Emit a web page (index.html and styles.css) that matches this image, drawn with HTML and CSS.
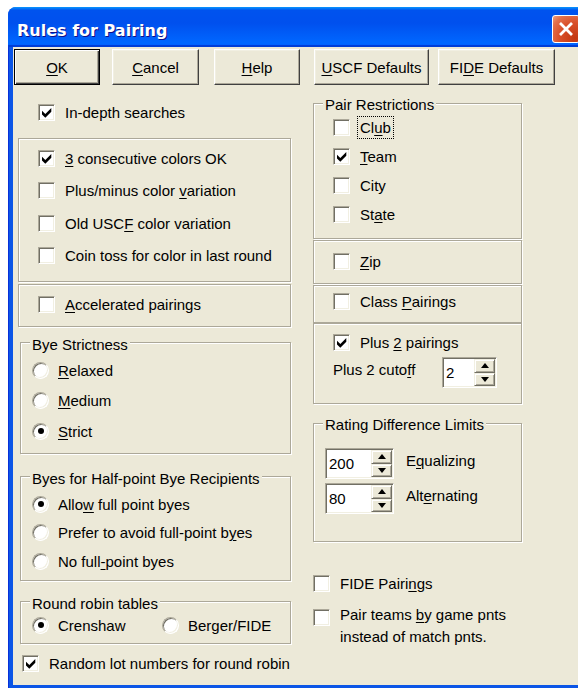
FILE: index.html
```html
<!DOCTYPE html>
<html lang="en">
<head>
<meta charset="utf-8">
<title>Rules for Pairing</title>
<link rel="stylesheet" href="styles.css">
</head>
<body>
<div class="window">
  <div class="titlebar">
    <span class="title">Rules for Pairing</span>
    <span class="close" aria-label="Close">
      <svg viewBox="0 0 26 26" width="26" height="26"><path d="M7 7 L19 19 M19 7 L7 19"/></svg>
    </span>
  </div>
  <div class="frame">
    <div class="client">
      <div class="buttons">
        <button class="btn default b-ok"><u>O</u>K</button>
        <button class="btn b-cancel"><u>C</u>ancel</button>
        <button class="btn b-help"><u>H</u>elp</button>
        <button class="btn b-uscf"><u>U</u>SCF Defaults</button>
        <button class="btn b-fide">FI<u>D</u>E Defaults</button>
      </div>

      <div class="panes">
        <!-- left column -->
        <div class="col col-left">
          <div class="opt indepth">
            <span class="cb"><svg viewBox="1 1 15 15" width="15" height="15"><polygon points="4,6.8 7.3,10.1 13.3,4.1 13.3,7.8 7.3,13.8 4,10.5"/></svg></span>
            <span class="lbl">In-depth searches</span>
          </div>

          <div class="group g-colors">
            <div class="opt"><span class="cb"><svg viewBox="1 1 15 15" width="15" height="15"><polygon points="4,6.8 7.3,10.1 13.3,4.1 13.3,7.8 7.3,13.8 4,10.5"/></svg></span><span class="lbl"><u>3</u> consecutive colors OK</span></div>
            <div class="opt"><span class="cb"></span><span class="lbl">Plus/minus color <u>v</u>ariation</span></div>
            <div class="opt"><span class="cb"></span><span class="lbl">Old USC<u>F</u> color variation</span></div>
            <div class="opt"><span class="cb"></span><span class="lbl">Coin toss for color in last round</span></div>
          </div>

          <div class="group g-accel">
            <div class="opt"><span class="cb"></span><span class="lbl"><u>A</u>ccelerated pairings</span></div>
          </div>

          <fieldset class="fs fs-bye">
            <legend>Bye Strictness</legend>
            <div class="opt"><span class="rb"></span><span class="lbl"><u>R</u>elaxed</span></div>
            <div class="opt"><span class="rb"></span><span class="lbl"><u>M</u>edium</span></div>
            <div class="opt"><span class="rb on"></span><span class="lbl"><u>S</u>trict</span></div>
          </fieldset>

          <fieldset class="fs fs-half">
            <legend>Byes for Half-point Bye Recipients</legend>
            <div class="opt"><span class="rb on"></span><span class="lbl">Allo<u>w</u> full point byes</span></div>
            <div class="opt"><span class="rb"></span><span class="lbl">Prefer to avoid full-point b<u>y</u>es</span></div>
            <div class="opt"><span class="rb"></span><span class="lbl">No full<u>-</u>point byes</span></div>
          </fieldset>

          <fieldset class="fs fs-rr">
            <legend>Round robin tables</legend>
            <div class="rr-row">
              <div class="opt rr-first"><span class="rb on"></span><span class="lbl">Crenshaw</span></div>
              <div class="opt"><span class="rb"></span><span class="lbl">Berger/FIDE</span></div>
            </div>
          </fieldset>

          <div class="opt randomlot">
            <span class="cb"><svg viewBox="1 1 15 15" width="15" height="15"><polygon points="4,6.8 7.3,10.1 13.3,4.1 13.3,7.8 7.3,13.8 4,10.5"/></svg></span>
            <span class="lbl">Random lot numbers for round robin</span>
          </div>
        </div>

        <!-- right column -->
        <div class="col col-right">
          <fieldset class="fs fs-pair">
            <legend>Pair Restrictions</legend>
            <div class="opt"><span class="cb"></span><span class="lbl focus">Cl<u>u</u>b</span></div>
            <div class="opt"><span class="cb"><svg viewBox="1 1 15 15" width="15" height="15"><polygon points="4,6.8 7.3,10.1 13.3,4.1 13.3,7.8 7.3,13.8 4,10.5"/></svg></span><span class="lbl"><u>T</u>eam</span></div>
            <div class="opt"><span class="cb"></span><span class="lbl">City</span></div>
            <div class="opt"><span class="cb"></span><span class="lbl">St<u>a</u>te</span></div>
          </fieldset>

          <div class="group g-zip">
            <div class="opt"><span class="cb"></span><span class="lbl"><u>Z</u>ip</span></div>
          </div>

          <div class="group g-class">
            <div class="opt"><span class="cb"></span><span class="lbl">Class <u>P</u>airings</span></div>
          </div>

          <div class="group g-plus2">
            <div class="opt"><span class="cb"><svg viewBox="1 1 15 15" width="15" height="15"><polygon points="4,6.8 7.3,10.1 13.3,4.1 13.3,7.8 7.3,13.8 4,10.5"/></svg></span><span class="lbl">Plus <u>2</u> pairings</span></div>
            <div class="spin-row cutoff-row">
              <span class="txt cutoff-txt">Plus 2 cuto<u>f</u>f</span>
              <div class="spin s-small"><span class="val">2</span><span class="updown"><span class="arr up"></span><span class="arr down"></span></span></div>
            </div>
          </div>

          <fieldset class="fs fs-rating">
            <legend>Rating Difference Limits</legend>
            <div class="spin-row">
              <div class="spin s-wide"><span class="val">200</span><span class="updown"><span class="arr up"></span><span class="arr down"></span></span></div>
              <span class="txt">E<u>q</u>ualizing</span>
            </div>
            <div class="spin-row second">
              <div class="spin s-wide"><span class="val">80</span><span class="updown"><span class="arr up"></span><span class="arr down"></span></span></div>
              <span class="txt">Alt<u>e</u>rnating</span>
            </div>
          </fieldset>

          <div class="opt fidepair">
            <span class="cb"></span><span class="lbl">FIDE Pairi<u>n</u>gs</span>
          </div>

          <div class="opt teams">
            <span class="cb"></span><span class="lbl multi">Pair teams <u>b</u>y game pnts<br>instead of match pnts.</span>
          </div>
        </div>
      </div>
    </div>
  </div>
</div>
</body>
</html>
```

FILE: styles.css
```css
* { box-sizing: border-box; }

html, body {
  margin: 0;
  padding: 0;
  background: #fff;
  overflow: hidden;
}

body {
  font-family: "Liberation Sans", Arial, sans-serif;
  font-size: 15px;
  line-height: 17px;
  color: #000;
}

u { text-underline-offset: 2px; }

/* ---------- window chrome ---------- */
.window {
  margin: 7px 0 0 8px;
  width: 590px;
  border-radius: 8px 8px 0 0;
  background: #0a4fe3;
}

.titlebar {
  height: 40px;
  display: flex;
  align-items: flex-start;
  padding: 0 18px 0 9px;
  border-radius: 8px 8px 0 0;
  background: linear-gradient(180deg, #0997ff, #0053ee 8%, #0050ee 40%, #0066ff 88%, #0066ff 93%, #005bff 95%, #003dd7 96%, #003dd7);
}

.title {
  flex: 1;
  margin-top: 14px;
  font-family: "DejaVu Sans", sans-serif;
  font-weight: bold;
  font-size: 16px;
  line-height: 19px;
  color: #fff;
  text-shadow: 1px 1px #0f1089;
}

.close {
  margin-top: 8px;
  width: 28px;
  height: 28px;
  border: 1px solid #fff;
  border-radius: 3px;
  background: radial-gradient(circle at 85% 85%, #c3360f 0%, #d9502a 50%, #e3704c 80%, #f0a080 100%);
  display: block;
}

.close svg {
  display: block;
  fill: none;
  stroke: #fff;
  stroke-width: 2.8;
}

.frame {
  padding: 0 5px 5px 5px;
  background: #0b55e6;
  box-shadow: inset 1px 0 0 #0831d9;
}

.client {
  height: 638px;
  background: #ece9d8;
  padding-top: 2px;
}

/* ---------- push buttons ---------- */
.buttons {
  display: flex;
  margin-left: 1px;
  height: 36px;
}

.btn {
  height: 36px;
  padding: 0;
  margin: 0;
  font: 15px/17px "Liberation Sans", Arial, sans-serif;
  color: #000;
  background: #ece9d8;
  border: 1px solid;
  border-color: #fff #404040 #404040 #fff;
  box-shadow: inset -1px -1px 0 #aca899, inset 1px 1px 0 #f1efe2;
  display: flex;
  align-items: center;
  justify-content: center;
}

.btn.default {
  border-color: #000;
  box-shadow: inset 1px 1px 0 #fff, inset -1px -1px 0 #404040, inset -2px -2px 0 #aca899;
}

.b-ok { width: 86px; }
.b-cancel { width: 87px; margin-left: 12px; }
.b-help { width: 86px; margin-left: 15px; }
.b-uscf { width: 115px; margin-left: 14px; }
.b-fide { width: 117px; margin-left: 9px; }

/* ---------- columns ---------- */
.panes {
  display: flex;
  margin-left: 5px;
}

.col {
  display: flex;
  flex-direction: column;
}

.col-left { width: 273px; }
.col-right { width: 209px; margin-left: 22px; }

/* ---------- option rows ---------- */
.opt {
  display: flex;
  align-items: center;
  height: 17px;
  white-space: nowrap;
}

.lbl {
  padding: 2px;
  border: 1px solid transparent;
  margin-left: 7px;
}

.lbl.focus { border: 1px dotted #000; }

/* sunken check box */
.cb {
  flex: none;
  width: 17px;
  height: 17px;
  background: #fff;
  border: 1px solid;
  border-color: #aca899 #fff #fff #aca899;
  box-shadow: inset 1px 1px 0 #716f64, inset -1px -1px 0 #f1efe2;
}

.cb svg { display: block; fill: #000; }

/* sunken radio button */
.rb {
  flex: none;
  width: 17px;
  height: 17px;
  border-radius: 50%;
  background: #fff;
  border: 1px solid;
  border-color: #aca899 #fff #fff #aca899;
  box-shadow: inset 1px 1px 0 #716f64, inset -1px -1px 0 #f1efe2;
  display: flex;
  align-items: center;
  justify-content: center;
}

.rb + .lbl { margin-left: 6px; }

.rb.on::after {
  content: "";
  width: 6px;
  height: 6px;
  border-radius: 50%;
  background: #000;
}

/* ---------- etched frames ---------- */
.group {
  display: flex;
  flex-direction: column;
  border: 1px solid #aca899;
  box-shadow: inset 1px 1px 0 #fff, 1px 1px 0 #fff;
  padding-left: 19px;
}

.fs {
  margin: 0;
  min-width: 0;
  border: 1px solid #aca899;
  box-shadow: inset 1px 1px 0 #fff, 1px 1px 0 #fff;
  padding-left: 11px;
  padding-right: 0;
  display: flex;
  flex-direction: column;
}

.fs legend {
  padding: 4px 2px 0;
  margin-left: -2px;
  line-height: 18px;
  background: #ece9d8;
}

/* left column */
.indepth { margin-top: 19px; padding-left: 20px; }

.g-colors {
  margin-top: 17px;
  padding-top: 11px;
  padding-bottom: 17px;
  gap: 15.33px;
}

.g-accel {
  margin-top: 2px;
  padding-top: 11px;
  padding-bottom: 13px;
}

.fs-bye {
  margin: 5px 0 0 2px;
  width: 271px;
  padding-top: 8px;
  padding-bottom: 13px;
  gap: 13.5px;
}

.fs-half {
  margin: 12px 0 0 2px;
  width: 271px;
  padding-top: 8px;
  padding-bottom: 10px;
  gap: 11.5px;
}

.fs-rr {
  margin: 10px 0 0 2px;
  width: 271px;
  padding-top: 4px;
  padding-bottom: 9px;
}

.rr-row { display: flex; }
.rr-first { width: 130px; }

.randomlot { margin-top: 11px; padding-left: 4px; }

/* right column */
.fs-pair {
  margin-top: 7px;
  padding-top: 5px;
  padding-bottom: 15px;
  gap: 12px;
}

.fs-pair .opt { margin-left: 8px; }

.g-zip {
  margin-top: 1px;
  padding-top: 12px;
  padding-bottom: 13px;
}

.g-class {
  margin-top: 1px;
  padding-top: 7px;
  padding-bottom: 12px;
}

.g-plus2 {
  padding-top: 10px;
  padding-bottom: 15px;
}

.spin-row {
  display: flex;
  align-items: flex-start;
}

.cutoff-row { margin-top: 6px; }

.txt {
  margin-top: 4px;
  white-space: nowrap;
}

.cutoff-txt { width: 109px; }

.fs-rating {
  margin-top: 8px;
  padding-top: 14px;
  padding-bottom: 27px;
}

.fs-rating .txt { margin-left: 12px; }
.fs-rating .second { margin-top: 4px; }

.fidepair { margin-top: 33px; }

.teams {
  margin-top: 17px;
  align-items: flex-start;
  height: auto;
}

.lbl.multi {
  line-height: 21.5px;
  margin-top: -6px;
  padding: 0 2px;
}

/* ---------- spin edit ---------- */
.spin {
  display: flex;
  height: 31px;
  background: #fff;
  border: 1px solid;
  border-color: #aca899 #fff #fff #aca899;
  box-shadow: inset 1px 1px 0 #716f64, inset -1px -1px 0 #f1efe2;
  padding: 1px;
}

.s-small { width: 55px; }
.s-wide { width: 69px; }

.val {
  flex: 1;
  display: flex;
  align-items: center;
  padding-left: 2px;
}

.updown {
  width: 21px;
  display: flex;
  flex-direction: column;
}

.arr {
  flex: 1;
  background: #ece9d8;
  border: 1px solid;
  border-color: #f1efe2 #716f64 #716f64 #f1efe2;
  box-shadow: inset 1px 1px 0 #fff, inset -1px -1px 0 #aca899;
  display: flex;
  align-items: center;
  justify-content: center;
}

.arr.up::before {
  content: "";
  border-left: 4.5px solid transparent;
  border-right: 4.5px solid transparent;
  border-bottom: 5px solid #000;
}

.arr.down::before {
  content: "";
  border-left: 4.5px solid transparent;
  border-right: 4.5px solid transparent;
  border-top: 5px solid #000;
}
```
